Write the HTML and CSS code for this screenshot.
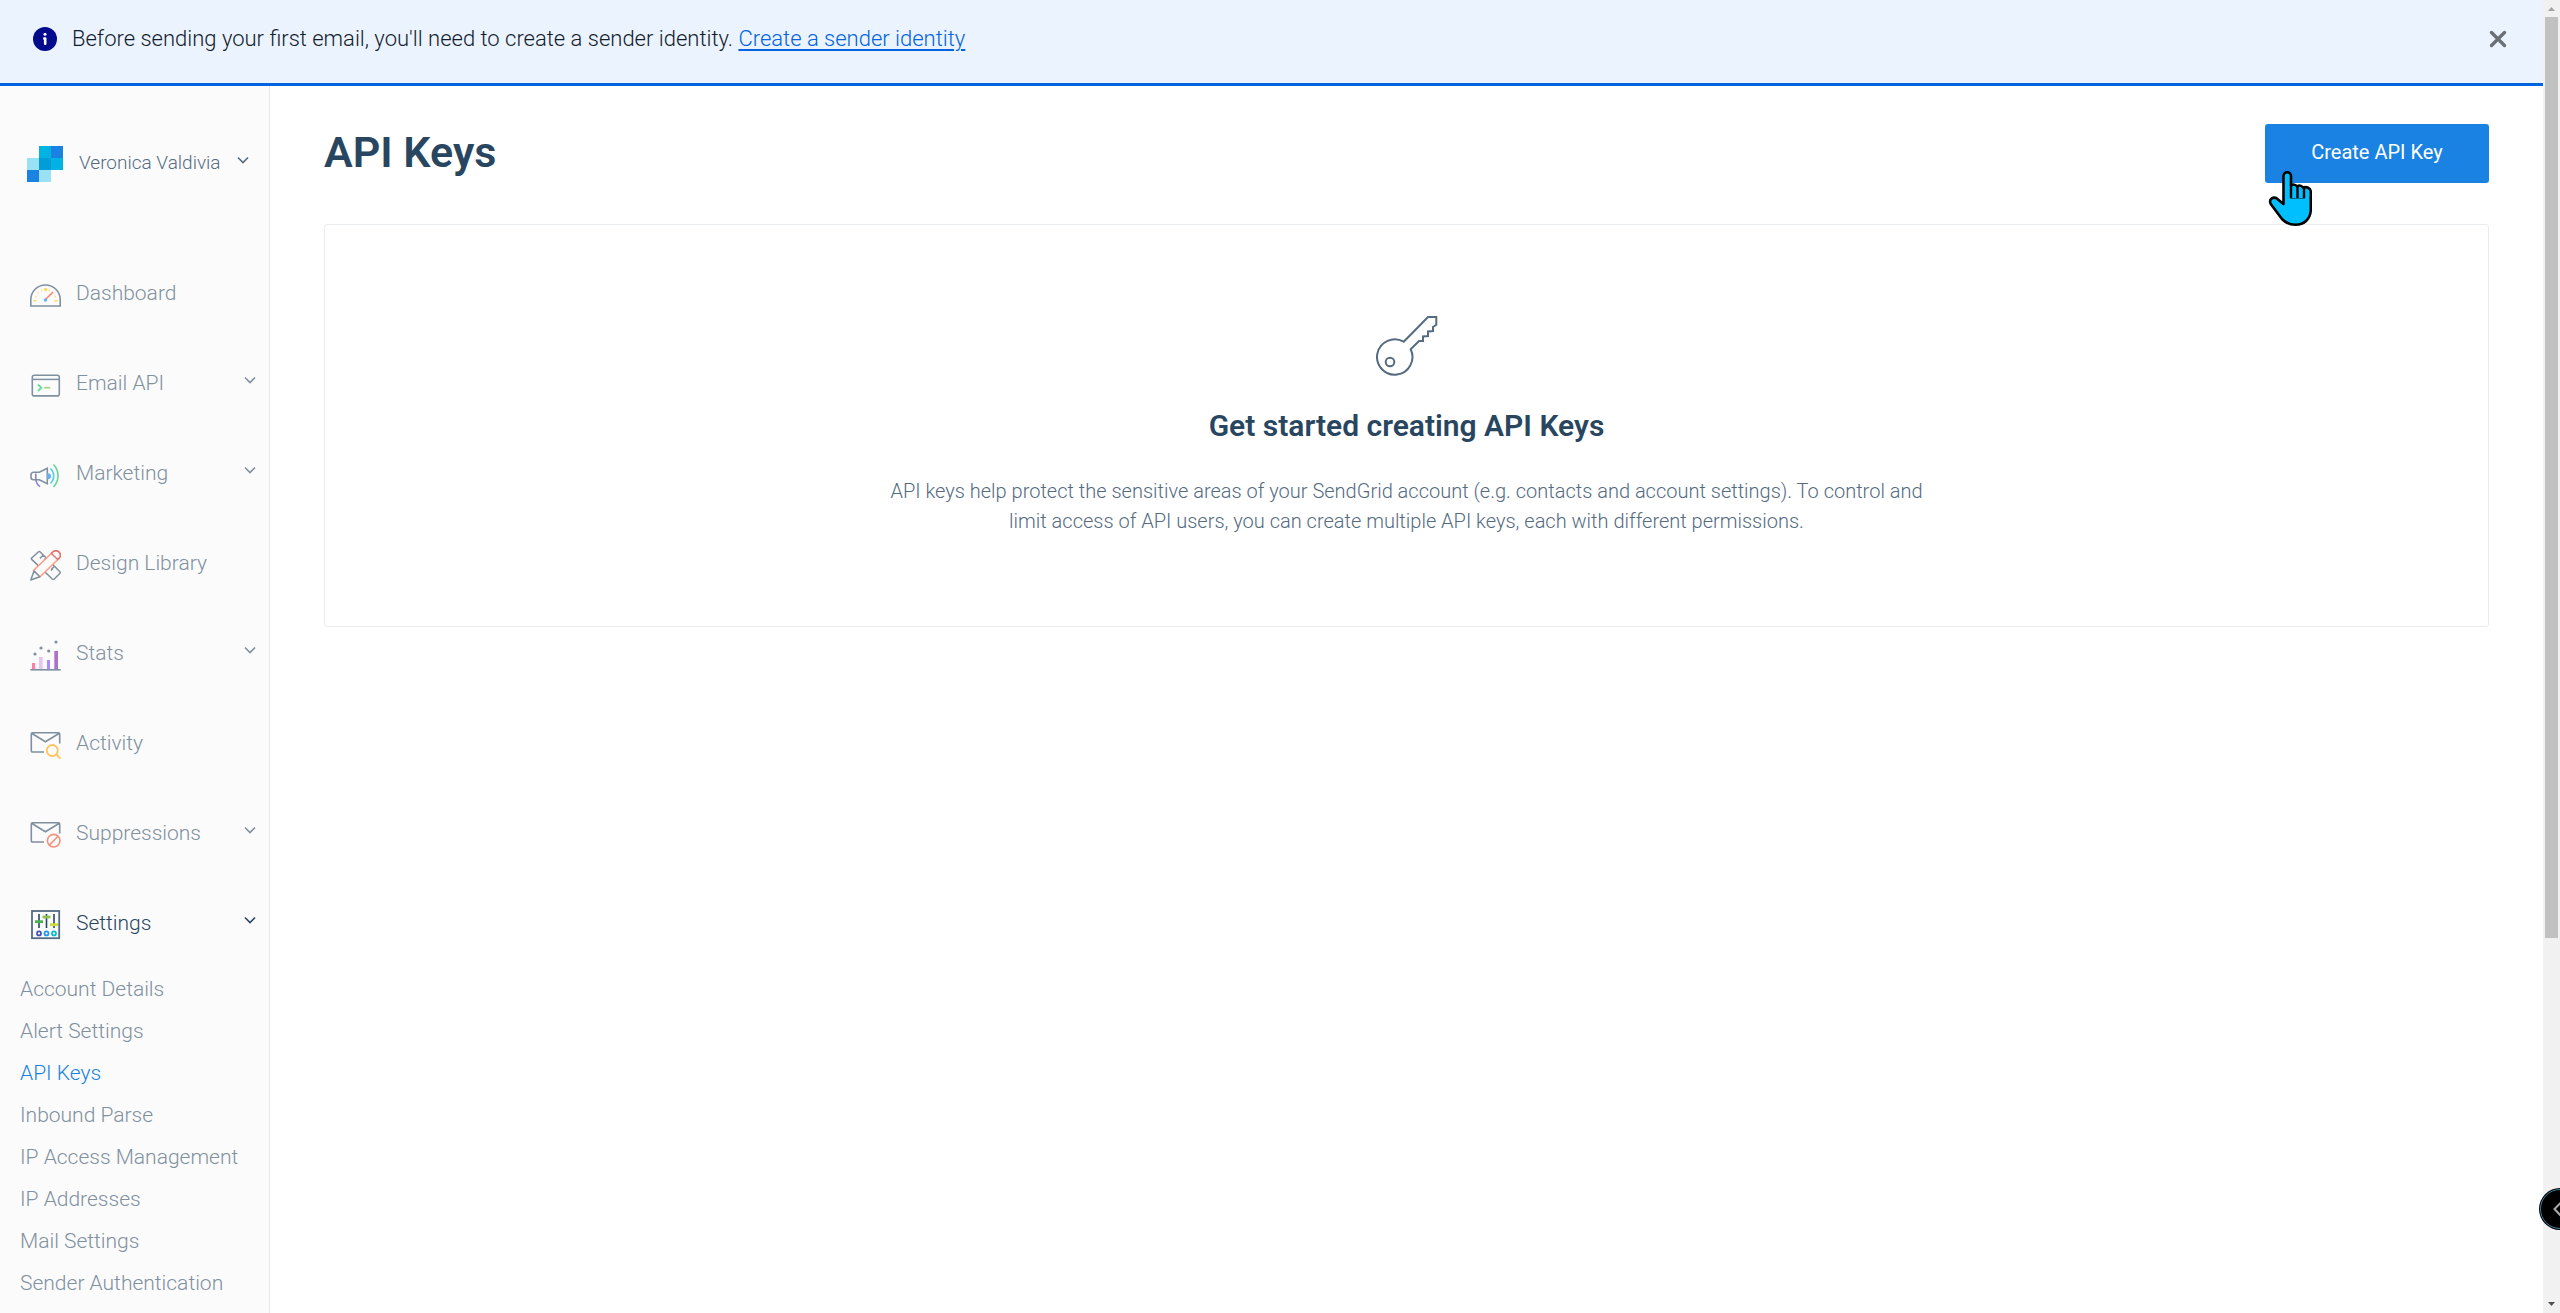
FILE: index.html
```html
<!DOCTYPE html>
<html lang="en">
<head>
<meta charset="utf-8">
<meta name="viewport" content="width=device-width, initial-scale=1">
<title>API Keys</title>
<link rel="stylesheet" href="styles.css">
</head>
<body>
<svg class="defs" aria-hidden="true">
  <symbol id="chevron" viewBox="0 0 12 8"><path d="M1 1.5l5 5 5-5" fill="none" stroke="currentColor" stroke-width="1.6"/></symbol>
  <symbol id="envelope" viewBox="0 0 32 36"><path d="M15 27H3.500a1.200 1.200 0 0 1-1.200-1.200V9a1.200 1.200 0 0 1 1.200-1.200h26A1.200 1.200 0 0 1 30.700 9v9.500M3 8.500l13.400 8.300L30 8.500" fill="none" stroke="#7f90a0" stroke-width="1.600"/></symbol>
</svg>

<div class="banner">
  <svg class="info" viewBox="0 0 24 24" aria-hidden="true"><circle cx="12" cy="12" r="12" fill="#030b8c"/><circle cx="12" cy="7.200" r="1.500" fill="#fff"/><path d="M11.300 11.500h.9v5.300" fill="none" stroke="#fff" stroke-width="2.600" stroke-linejoin="round" stroke-linecap="round"/></svg>
  <p>Before sending your first email, you'll need to create a sender identity. <a href="#sender">Create a sender identity</a></p>
  <button class="close" aria-label="Close"><svg viewBox="0 0 18 18"><path d="M2.500 2.500l13 13M15.500 2.500l-13 13" stroke="#6b7075" stroke-width="3.400" stroke-linecap="round"/></svg></button>
</div>

<div class="app">
  <aside class="sidebar">
    <button class="account">
      <svg class="logo" viewBox="0 0 36 36" aria-hidden="true" shape-rendering="crispEdges"><path d="M12 0h12v12H12zM24 12h12v12H24z" fill="#00b3e3"/><path d="M24 0h12v12H24zM0 24h12v12H0z" fill="#1a82e2"/><path d="M0 12h12v12H0zM12 24h12v12H12z" fill="#99e1f4"/><path d="M12 12h12v12H12z" fill="#009dd9"/></svg>
      <span>Veronica Valdivia</span>
      <svg class="chevron"><use href="#chevron"/></svg>
    </button>

    <nav>
      <ul class="menu">
        <li><a href="#dashboard">
          <svg class="icon" viewBox="0 0 32 36" fill="none"><path d="M1.800 31v-6.300a14.700 14.700 0 0 1 29.400 0V31z" stroke="#7f90a0" stroke-width="1.600"/><path d="M16.500 24.500l7.500-7.500" stroke="#ff8a6b" stroke-width="1.700"/><circle cx="16.500" cy="25" r="1.700" fill="#64b0f5"/><circle cx="16.500" cy="14.500" r="1.700" fill="#ffd95c"/><g fill="#ffe08a"><circle cx="12.500" cy="15.400" r=".9"/><circle cx="9" cy="18" r=".9"/><circle cx="6.800" cy="21.500" r=".9"/><circle cx="20.500" cy="15.400" r=".9"/><circle cx="26.200" cy="21.500" r=".9"/></g><path d="M4.500 25.800h3M25.500 25.800h3" stroke="#ffd95c" stroke-width="1.400"/></svg>
          <span>Dashboard</span></a></li>
        <li><a href="#email-api">
          <svg class="icon" viewBox="0 0 32 36" fill="none"><rect x="3.300" y="10.300" width="27" height="20.600" rx="2" stroke="#7f90a0" stroke-width="1.600"/><path d="M3.500 14.400h26.700" stroke="#7f90a0" stroke-width="1.500"/><path d="M9 19.500l3.300 3.200L9 26" stroke="#5fdc9c" stroke-width="1.800"/><path d="M15.200 22.700h6" stroke="#a6d77c" stroke-width="1.700"/></svg>
          <span>Email API</span><svg class="chevron"><use href="#chevron"/></svg></a></li>
        <li><a href="#marketing">
          <svg class="icon" viewBox="0 0 32 36" fill="none" stroke-width="1.600"><path d="M6.800 18.500v5.200c.2 3.500 1.700 6.300 4.300 8" stroke="#8583d5"/><path d="M18.300 13.300v15.400l-8-4H4.500A2.500 2.500 0 0 1 2 22.200v-2.400a2.500 2.500 0 0 1 2.500-2.500h5.800z" stroke="#7f90a0"/><path d="M19 19a2.200 2.200 0 0 1 0 4.400z" fill="#64b0f5" stroke="#64b0f5"/><path d="M21.500 13.500c4.300 4 4.300 11 0 15" stroke="#55cfe6"/><path d="M24.500 9.500c6 6.500 6 16 0 22.500" stroke="#63d69b"/></svg>
          <span>Marketing</span><svg class="chevron"><use href="#chevron"/></svg></a></li>
        <li><a href="#design">
          <svg class="icon" viewBox="0 0 32 36" fill="none" stroke-width="1.500" stroke-linejoin="round"><path d="M9.500 6.800L2.700 13a1 1 0 0 0 0 1.400L23.300 34a1.500 1.500 0 0 0 2 0l5.400-5.500a1.500 1.500 0 0 0 0-2L11 6.800a1 1 0 0 0-1.500 0zM14.200 10.200l-3.300 3.200M17 13l-2 2M22 25.500l2-2M25.200 21.500l-3 3M20 20.500l-2 2" stroke="#7f90a0"/><path d="M4.500 25.500L23.500 7.200a4.300 4.300 0 0 1 6.600 6L10.800 32z" fill="#fbfbfb" stroke="#ff9a80"/><path d="M23.500 7.200a4.300 4.300 0 0 1 6.600 6l-1.300 1.300-6.500-6z" stroke="#e2736f"/><path d="M5 26l-3.200 9 9-3.200z" stroke="#7f90a0" fill="#fbfbfb"/></svg>
          <span>Design Library</span></a></li>
        <li><a href="#stats">
          <svg class="icon" viewBox="0 0 32 36"><path d="M3 28h3.200v6H3z" fill="#ff7fab"/><path d="M10 22h3.700v12H10z" fill="#e8c4f0"/><path d="M18 25h3v9h-3z" fill="#a98bff"/><path d="M25.300 16H29v18h-3.700z" fill="#ab72c8"/><path d="M1.300 34h30.400v1.600H1.300z" fill="#7f90a0"/><g fill="#7f90a0"><circle cx="6" cy="19" r="1.600"/><circle cx="12" cy="13" r="1.600"/><circle cx="19.700" cy="16" r="1.600"/><circle cx="27" cy="7" r="1.600"/></g></svg>
          <span>Stats</span><svg class="chevron"><use href="#chevron"/></svg></a></li>
        <li><a href="#activity">
          <svg class="icon" viewBox="0 0 32 36" fill="none"><use href="#envelope"/><circle cx="23.300" cy="25.500" r="5.500" stroke="#ffc35c" stroke-width="1.800"/><path d="M27.300 29.500l4.200 4.200" stroke="#ffc35c" stroke-width="1.800"/></svg>
          <span>Activity</span></a></li>
        <li><a href="#suppressions">
          <svg class="icon" viewBox="0 0 32 36" fill="none"><use href="#envelope"/><circle cx="24.700" cy="25.700" r="6.300" stroke="#f5907b" stroke-width="1.600"/><path d="M20.300 30.100l8.800-8.800" stroke="#f5907b" stroke-width="1.600"/></svg>
          <span>Suppressions</span><svg class="chevron"><use href="#chevron"/></svg></a></li>
        <li><a class="active" href="#settings">
          <svg class="icon" viewBox="0 0 32 36" fill="none"><rect x="3" y="6" width="27.200" height="27.200" stroke="#546b81" stroke-width="1.800"/><path d="M10 9v14M17.500 9v14M25 9v14" stroke="#294661" stroke-width="1.600"/><path d="M6 16.700h8" stroke="#4caf50" stroke-width="2.800"/><path d="M13.500 12h8" stroke="#8bc34a" stroke-width="2.800"/><path d="M21 19.700h8" stroke="#cddc39" stroke-width="2.800"/><g stroke-width="1.700"><circle cx="10" cy="28.400" r="2" stroke="#3f51b5"/><circle cx="17.500" cy="28.400" r="2" stroke="#2196f3"/><circle cx="25" cy="28.400" r="2" stroke="#00bcd4"/></g></svg>
          <span>Settings</span><svg class="chevron"><use href="#chevron"/></svg></a>
          <ul class="submenu">
            <li><a href="#account">Account Details</a></li>
            <li><a href="#alerts">Alert Settings</a></li>
            <li><a class="current" href="#api-keys" aria-current="page">API Keys</a></li>
            <li><a href="#parse">Inbound Parse</a></li>
            <li><a href="#access">IP Access Management</a></li>
            <li><a href="#addresses">IP Addresses</a></li>
            <li><a href="#mail">Mail Settings</a></li>
            <li><a href="#auth">Sender Authentication</a></li>
          </ul>
        </li>
      </ul>
    </nav>
  </aside>

  <main>
    <header class="page-header">
      <h1>API Keys</h1>
      <div class="action">
        <button class="primary">Create API Key</button>
        <svg class="pointer" viewBox="0 0 44 56" aria-hidden="true"><path d="M15.500 34V6a3.700 3.700 0 0 1 7.500 0v9.500c2-1.500 4.500-1 6 .8 2-1.200 4.500-.8 6 1.200 3.500-1.200 7.500.5 7.800 4V40c-.5 9-6.500 14.700-15.300 14.700-6 0-9.500-1.500-13.500-5.700L3.500 35C-1 29.500 6 25.500 10 29.500z" fill="#00bfff" stroke="#000" stroke-width="2.600" stroke-linejoin="round"/><path d="M23 14v14M29.500 16v12M36 18v10" stroke="#000" stroke-width="2.400"/><path d="M22 28.500h15" stroke="#05688c" stroke-width="1"/></svg>
      </div>
    </header>

    <section class="empty">
      <svg class="key" viewBox="0 0 62 62" fill="none" stroke="#546b81" stroke-width="2" aria-hidden="true"><path d="M27.700 25.700L52 1h8.300v7.700L57 11v4l-5 .5V20l-5 .5V25h-4l-8.300 8.300A17.700 17.700 0 1 1 27.700 25.700z"/><circle cx="14" cy="46" r="4.300"/></svg>
      <h2>Get started creating API Keys</h2>
      <p>API keys help protect the sensitive areas of your SendGrid account (e.g. contacts and account settings). To control and limit access of API users, you can create multiple API keys, each with different permissions.</p>
    </section>
  </main>
</div>

<div class="scrollbar" aria-hidden="true">
  <svg viewBox="0 0 17 17"><path d="M5 11l3.500-4 3.500 4z" fill="#a3a3a3"/></svg>
  <div class="track"><div class="thumb"></div></div>
  <svg viewBox="0 0 17 17"><path d="M5 6l3.500 4L12 6z" fill="#505050"/></svg>
</div>
<button class="drawer" aria-label="Open panel"><svg viewBox="0 0 42 42" fill="none"><circle cx="21" cy="21" r="19.500" stroke="#3f7f9c" stroke-width="1"/><path d="M22 14.500L15.500 21l6.500 7" stroke="#aaa" stroke-width="2"/></svg></button>
</body>
</html>
```
FILE: styles.css
```css
* { box-sizing: border-box; }

body {
  margin: 0;
  padding-right: 17px;
  min-height: 100vh;
  display: flex;
  flex-direction: column;
  background: #fff;
  color: #294661;
  font: 300 20px/30px Roboto, "Liberation Sans", sans-serif;
}

h1, h2, p, ul { margin: 0; padding: 0; }
ul { list-style: none; }
a { color: inherit; text-decoration: none; }
button { border: 0; background: none; padding: 0; font: inherit; color: inherit; cursor: pointer; }
svg { display: block; flex: none; }
.defs { position: absolute; width: 0; height: 0; }

/* Notice bar */
.banner {
  display: flex;
  align-items: center;
  gap: 15px;
  padding: 24px 36px 29px 33px;
  background: #ebf3ff;
  border-bottom: 3px solid #0263e0;
  color: #121c2d;
  font-size: 22px;
}
.banner p { flex: 1; }
.banner a { color: #0263e0; text-decoration: underline; text-decoration-thickness: 2px; text-underline-offset: 3px; }
.info { width: 24px; height: 24px; }
.close svg { width: 18px; height: 18px; }

.app { flex: 1; display: flex; }

/* Sidebar */
.sidebar {
  flex: 0 0 270px;
  background: #fbfbfb;
  border-right: 1px solid #e6e8ea;
  color: #7f90a0;
}
.account {
  display: flex;
  align-items: center;
  width: 100%;
  gap: 16px;
  padding: 58px 20px 66px 27px;
  color: #546b81;
  font-size: 19px;
  text-align: left;
  white-space: nowrap;
}
.account span { flex: 1; }
.logo { width: 36px; height: 36px; margin-top: 2px; }
.chevron { width: 12px; height: 8px; margin-bottom: 6px; }
.menu { font-size: 21px; }
.menu > li > a {
  display: flex;
  align-items: center;
  gap: 15px;
  height: 90px;
  padding: 0 13px 0 29px;
}
.menu > li > a span { flex: 1; }
.icon { width: 32px; height: 36px; }
.active { color: #294661; }
.submenu a { display: block; padding: 6px 20px; }
.submenu .current { color: #1a82e2; }

/* Page */
main { flex: 1; padding: 38px 54px; }
.page-header {
  display: flex;
  align-items: center;
  justify-content: space-between;
  margin-bottom: 41px;
}
h1 { padding-bottom: 4px; font-size: 43px; line-height: 54px; font-weight: 600; }
.action { position: relative; }
.primary {
  display: block;
  min-width: 224px;
  height: 59px;
  padding: 0 46px 3px;
  border-radius: 3px;
  background: #1a82e2;
  color: #fff;
  font-weight: 400;
}
.pointer { position: absolute; left: 3px; top: 46px; width: 44px; height: 56px; }

.empty {
  display: flex;
  flex-direction: column;
  align-items: center;
  padding: 91px 40px 90px;
  border: 1px solid #e9ecef;
  border-radius: 3px;
  text-align: center;
}
.key { width: 62px; height: 62px; }
h2 { margin: 28px 0 30px; font-size: 30px; line-height: 40px; font-weight: 600; }
.empty p { max-width: 1060px; color: #546b81; }

/* Window edge */
.scrollbar {
  position: fixed;
  top: 0;
  right: 0;
  bottom: 0;
  width: 17px;
  display: flex;
  flex-direction: column;
  background: #f1f1f1;
}
.track { flex: 1; padding: 0 2px; }
.thumb { height: 72%; background: #c1c1c1; }
.drawer {
  position: fixed;
  right: -21px;
  bottom: 83px;
  width: 42px;
  height: 42px;
  border-radius: 50%;
  background: #000;
}
```
